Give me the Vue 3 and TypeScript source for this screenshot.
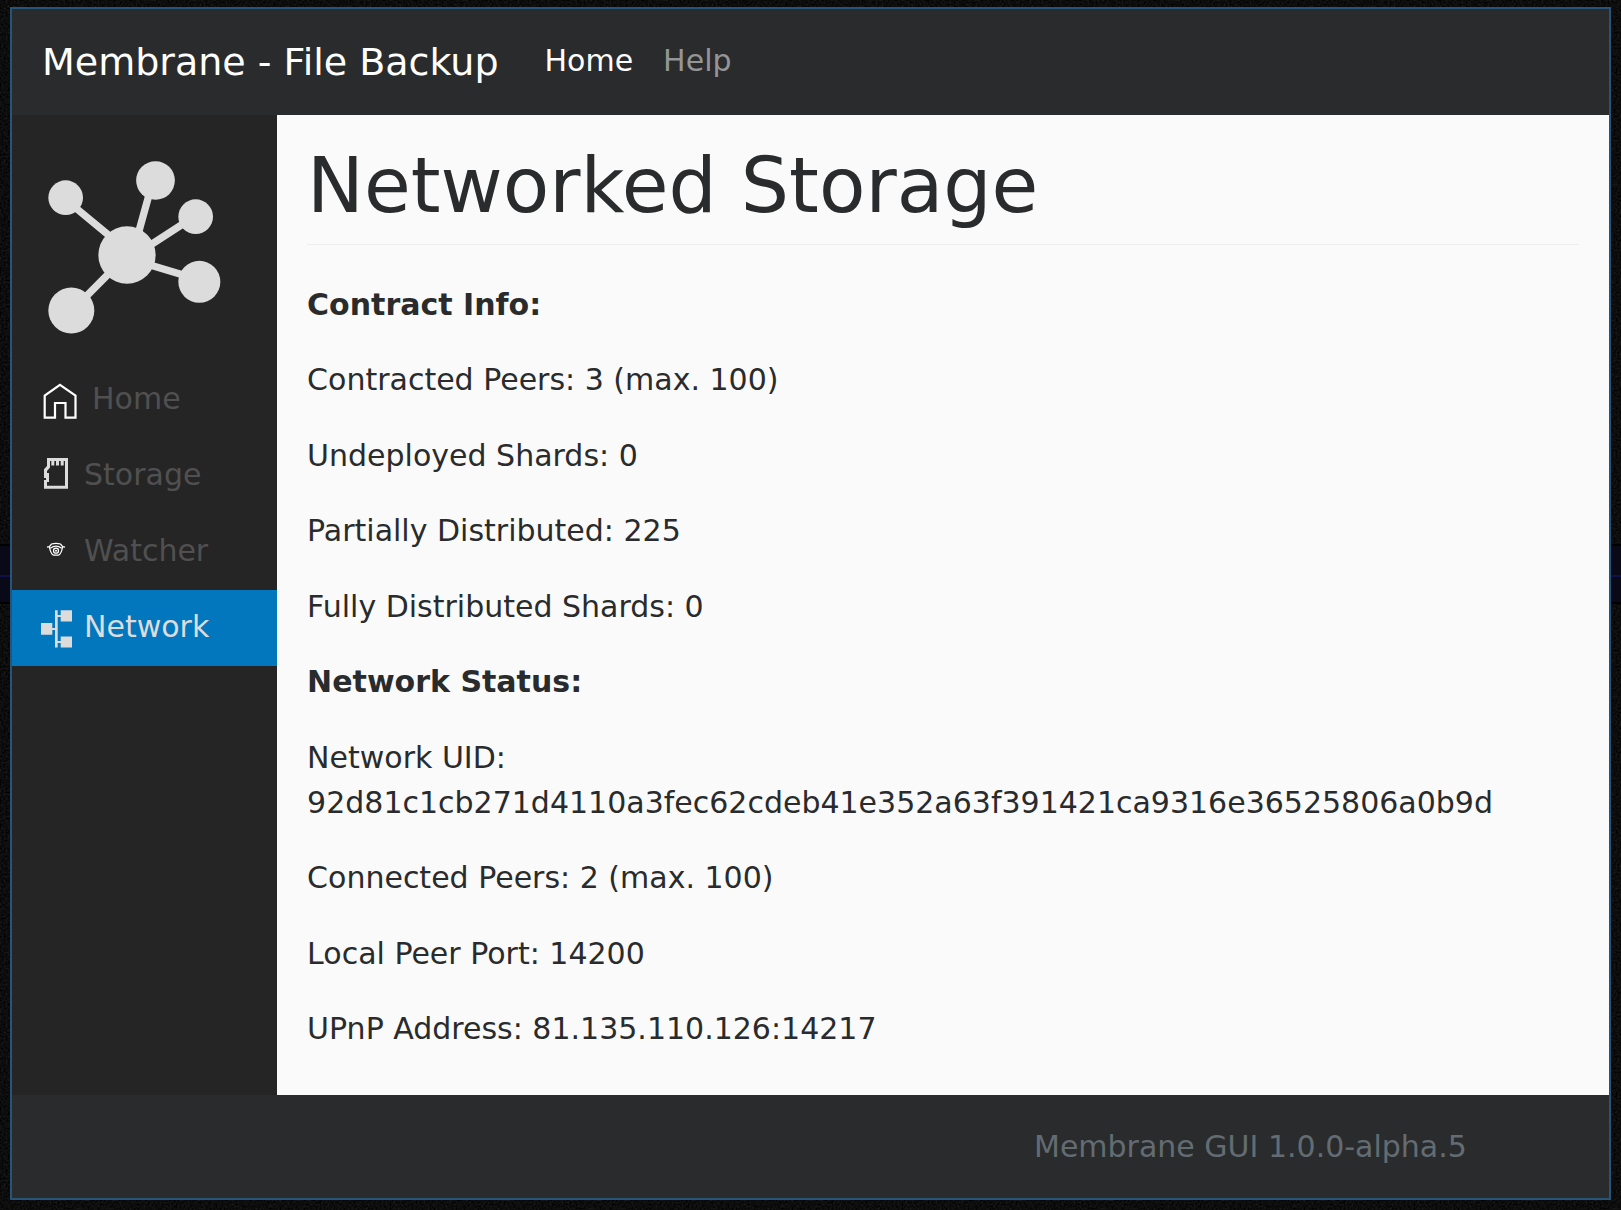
<script setup lang="ts">
type IconName = 'home' | 'storage' | 'watcher' | 'network'

interface NavItem {
  label: string
  icon: IconName
}

const items: NavItem[] = [
  { label: 'Home', icon: 'home' },
  { label: 'Storage', icon: 'storage' },
  { label: 'Watcher', icon: 'watcher' },
  { label: 'Network', icon: 'network' },
]

const active: IconName = 'network'
</script>

<template>
  <div class="desktop">
    <svg class="grain" aria-hidden="true">
      <filter id="grain" x="0" y="0" width="100%" height="100%" color-interpolation-filters="sRGB">
        <feTurbulence type="fractalNoise" baseFrequency="0.5" numOctaves="2" seed="4" />
        <feColorMatrix type="matrix" values="0.16 0 0 0 -0.03  0.16 0 0 0 -0.03  0.16 0 0 0 -0.03  0 0 0 0 1" />
      </filter>
      <rect width="100%" height="100%" filter="url(#grain)" />
    </svg>
    <div class="band"></div>

    <div class="window">
      <header class="topbar">
        <a class="brand" href="#">Membrane - File Backup</a>
        <nav class="links">
          <a class="current" href="#">Home</a>
          <a href="#">Help</a>
        </nav>
      </header>

      <div class="body">
        <aside class="sidebar">
          <svg class="logo" viewBox="144 93 519 519" aria-hidden="true">
            <path
              d="M381 361 213 222M413 317 451 180M430 359 570 268M430 399 570 441M350 407 240 518"
              fill="none"
              stroke="#dcdcdc"
              stroke-width="22"
            />
            <g fill="#dcdcdc">
              <circle cx="381" cy="375" r="86" />
              <circle cx="197" cy="203" r="52" />
              <circle cx="466.500" cy="151.500" r="58" />
              <circle cx="587" cy="260" r="52" />
              <circle cx="598" cy="455.500" r="63" />
              <circle cx="214" cy="541.500" r="69" />
            </g>
          </svg>

          <nav class="menu">
            <a
              v-for="item in items"
              :key="item.icon"
              href="#"
              class="item"
              :class="{ active: item.icon === active }"
            >
              <svg v-if="item.icon === 'home'" class="icon wide" viewBox="0 0 42 40" aria-hidden="true">
                <path d="M19 4.800 34.500 15.500V37.700H24.500V23H14V37.700H3.700V15.500Z" fill="none" stroke="#fff" stroke-width="2.200" />
              </svg>
              <svg v-else-if="item.icon === 'storage'" class="icon" viewBox="0 0 34 40" aria-hidden="true">
                <path
                  fill="#dcdcdc"
                  fill-rule="evenodd"
                  d="M6 2H27V32.700H3V24H5V22H3V13.300L6 10ZM9 5V11.500L6 15V17H8V26H6V29.700H24V5Z"
                />
                <path fill="#dcdcdc" d="M10.300 5H13.300V9.500H10.300ZM15 5H18V9.500H15ZM19.700 5H22.700V9.500H19.700Z" />
              </svg>
              <svg v-else-if="item.icon === 'watcher'" class="icon" viewBox="0 0 34 40" aria-hidden="true">
                <g fill="none" stroke="#fff" stroke-width="1.300">
                  <path d="M6 15.200 8.300 14.700 10.500 12Q15 10.700 19.500 12L21.700 14.700 24 15.200" />
                  <path d="M8.300 14.500Q9.500 21.500 12.500 23.200H17.500Q20.500 21.500 21.700 14.500" />
                  <path d="M9.300 16.200Q15 12.200 20.700 16.200" />
                  <circle cx="15" cy="18.700" r="2.500" />
                </g>
                <circle cx="15" cy="18.700" r="1" fill="#fff" />
              </svg>
              <svg v-else class="icon" viewBox="0 0 34 40" aria-hidden="true">
                <path
                  fill="#dcdcdc"
                  d="M0 15H11.300V20H14V2.300H16.700V7H19.700V2.300H31V13.500H19.700V9H16.700V33H19.700V28.500H31V39.500H19.700V35H16.700V39.500H14V22H11.300V26.700H0Z"
                />
              </svg>
              <span class="label">{{ item.label }}</span>
            </a>
          </nav>
        </aside>

        <main class="content">
          <h1>Networked Storage</h1>
          <div class="details">
            <p><strong>Contract Info:</strong></p>
            <p>Contracted Peers: 3 (max. 100)</p>
            <p>Undeployed Shards: 0</p>
            <p>Partially Distributed: 225</p>
            <p>Fully Distributed Shards: 0</p>
            <p><strong>Network Status:</strong></p>
            <p>Network UID: 92d81c1cb271d4110a3fec62cdeb41e352a63f391421ca9316e36525806a0b9d</p>
            <p>Connected Peers: 2 (max. 100)</p>
            <p>Local Peer Port: 14200</p>
            <p>UPnP Address: 81.135.110.126:14217</p>
          </div>
        </main>
      </div>

      <footer class="footer">Membrane GUI 1.0.0-alpha.5</footer>
    </div>
  </div>
</template>

<style>
body {
  margin: 0;
  background: #0c0c0c;
}
</style>

<style scoped>
.desktop {
  position: relative;
  display: flex;
  box-sizing: border-box;
  min-height: 100vh;
  padding: 7px 10px 10px;
  font-family: "DejaVu Sans", sans-serif;
  font-size: 30px;
  line-height: 45px;
  color: #292b2c;
}

.grain {
  position: absolute;
  inset: 0;
  width: 100%;
  height: 100%;
}

.band {
  position: absolute;
  left: 0;
  right: 0;
  top: 544px;
  height: 60px;
  box-sizing: border-box;
  border-top: 2px solid #000;
  border-bottom: 2px solid #000;
  background: linear-gradient(#090918 29px, #10104a 29px, #10104a 31px, #090918 31px);
}

.window {
  position: relative;
  display: flex;
  flex: 1;
  flex-direction: column;
  min-width: 0;
  border: 2px solid #275579;
  background: #2a2b2d;
}

a {
  text-decoration: none;
}

.topbar {
  display: flex;
  align-items: baseline;
  gap: 46px;
  padding: 25px 30px 24px;
}

.brand {
  font-size: 38px;
  line-height: 57px;
  color: #fff;
}

.links {
  position: relative;
  top: -4px;
  display: flex;
  gap: 30px;
}

.links a {
  color: #949596;
}

.links .current {
  color: #fff;
}

.body {
  display: flex;
  flex: 1;
}

.sidebar {
  flex: 0 0 16.6%;
  background: #252525;
}

.logo {
  display: block;
  width: 173px;
  height: 173px;
  margin: 46px 0 28px 36px;
}

.item {
  display: flex;
  align-items: center;
  gap: 9px;
  height: 76px;
  padding-left: 29px;
  color: #505050;
}

.item.active {
  background: #0277bd;
  color: #dcdcdc;
}

.icon {
  flex: none;
  width: 34px;
  height: 40px;
}

.icon.wide {
  width: 42px;
}

.label {
  padding-bottom: 4px;
}

.content {
  display: flex;
  flex: 1;
  flex-direction: column;
  min-width: 0;
  padding: 25px 30px 44px;
  background: #fafafa;
}

h1 {
  margin: 0 0 37px;
  padding-bottom: 13px;
  border-bottom: 1px solid #eee;
  font-size: 76px;
  font-weight: 400;
  line-height: 91px;
}

.details {
  display: flex;
  flex: 1;
  flex-direction: column;
  justify-content: space-between;
  gap: 30px;
}

p {
  margin: 0;
  overflow-wrap: break-word;
}

.footer {
  padding: 29px 8.9% 29px 30px;
  text-align: right;
  color: #636c72;
}
</style>
